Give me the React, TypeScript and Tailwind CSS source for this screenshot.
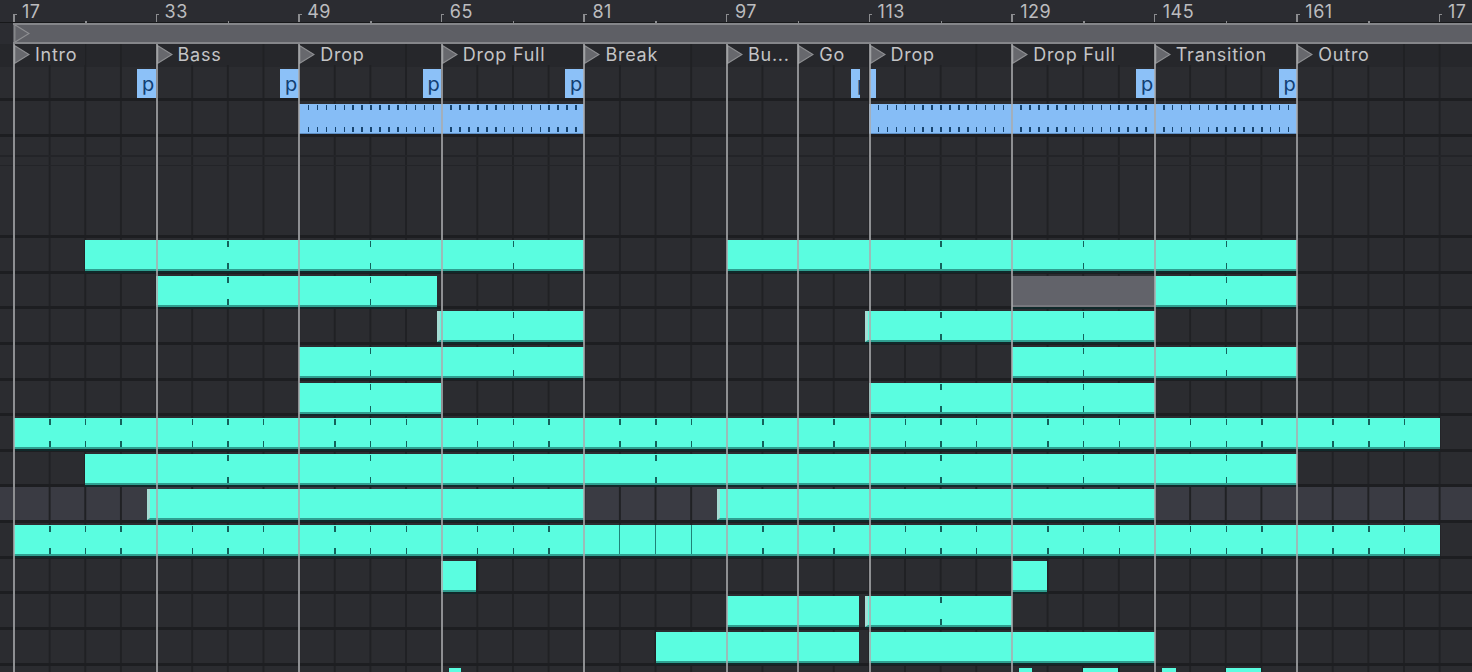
type Clip = { from: number; to: number; ticks?: 'half' | 'all'; bars?: number[]; tone?: 'grey'; edge?: boolean };

const STEP = 35.65;
const ORIGIN = 13.4;

const bars = ['17', '33', '49', '65', '81', '97', '113', '129', '145', '161', '17'];

const locators = [
  { x: 14, name: 'Intro' },
  { x: 156.6, name: 'Bass' },
  { x: 299.2, name: 'Drop' },
  { x: 441.8, name: 'Drop Full' },
  { x: 584.4, name: 'Break' },
  { x: 727, name: 'Bu...' },
  { x: 798.3, name: 'Go' },
  { x: 869.6, name: 'Drop' },
  { x: 1012.2, name: 'Drop Full' },
  { x: 1154.8, name: 'Transition' },
  { x: 1297.4, name: 'Outro' },
];

const pClips = [
  { from: 137, to: 156, label: true },
  { from: 280, to: 299, label: true },
  { from: 423, to: 441, label: true },
  { from: 565, to: 584, label: true },
  { from: 851, to: 860, label: true, cut: true },
  { from: 870, to: 876, label: false },
  { from: 1136, to: 1155, label: true },
  { from: 1279, to: 1297, label: true },
];

const tracks: { clips: Clip[]; tint?: boolean }[] = [
  { clips: [{ from: 85, to: 584, ticks: 'half' }, { from: 727, to: 1297, ticks: 'half' }] },
  { clips: [{ from: 156, to: 437, ticks: 'half' }, { from: 1012, to: 1155, tone: 'grey' }, { from: 1155, to: 1297, ticks: 'half' }] },
  { clips: [{ from: 437, to: 584, ticks: 'half', edge: true }, { from: 865, to: 1155, ticks: 'half', edge: true }] },
  { clips: [{ from: 299, to: 584, ticks: 'half' }, { from: 1012, to: 1297, ticks: 'half' }] },
  { clips: [{ from: 299, to: 441, ticks: 'half' }, { from: 869, to: 1155, ticks: 'half' }] },
  { clips: [{ from: 14, to: 1440, ticks: 'all' }] },
  { clips: [{ from: 85, to: 1297, ticks: 'half' }] },
  { tint: true, clips: [{ from: 147, to: 584, edge: true }, { from: 717, to: 1155, edge: true }] },
  { clips: [{ from: 14, to: 1440, ticks: 'all', bars: [17, 18, 19] }] },
  { clips: [{ from: 441, to: 476 }, { from: 1012, to: 1047 }] },
  { clips: [{ from: 727, to: 859 }, { from: 865, to: 1012, ticks: 'half', edge: true }] },
  { clips: [{ from: 656, to: 859 }, { from: 869, to: 1155 }] },
  { clips: [{ from: 449, to: 461 }, { from: 1019, to: 1032 }, { from: 1083, to: 1118 }, { from: 1162, to: 1176 }, { from: 1226, to: 1261 }] },
];

const gridBg =
  'bg-[linear-gradient(to_right,#202124_1.5px,transparent_1.5px)] bg-[length:35.65px_100%] bg-[position:13px_0]';

function Triangle({ dark }: { dark?: boolean }) {
  return (
    <svg viewBox="0 0 16 19" className="h-[19px] w-4 shrink-0">
      <path d="M0.8 0.8 L15 9.5 L0.8 18.2 Z" fill={dark ? '#63646a' : '#67686d'} stroke="#8e8f92" strokeWidth="1.2" />
    </svg>
  );
}

function Ruler() {
  return (
    <div className="flex h-[23px] border-b border-[#17181a] pl-[14px] pt-[3px]">
      {bars.map((bar, i) => (
        <div key={i} className="relative flex h-[19px] w-[142.6px] shrink-0 items-end">
          <span className="absolute bottom-0 left-[-1px] h-[8px] w-[1.5px] bg-[#8b8c8f]" />
          <span className="absolute bottom-[7px] left-0 h-[1.5px] w-[2.5px] bg-[#8b8c8f]" />
          <span className="absolute bottom-[-1px] left-[71px] h-[2px] w-[1.5px] bg-[#8b8c8f]" />
          <span className="pl-2 text-[18px] leading-[21px] tracking-[0.5px] text-[#bcbcbf]">{bar}</span>
        </div>
      ))}
    </div>
  );
}

function Overview() {
  return (
    <div className="ml-[13px] flex h-[21px] items-center border-y-2 border-[#85868a] bg-[#5e5f65] pl-px">
      <Triangle dark />
    </div>
  );
}

function LocatorRow() {
  return (
    <div className={`flex h-[23px] bg-[#26272b] pl-[14px] ${gridBg}`}>
      {locators.map((loc, i) => {
        const next = locators[i + 1]?.x ?? 1500;
        return (
          <div key={i} className="flex shrink-0 items-start" style={{ width: next - loc.x }}>
            <div className="flex h-[21px] items-center bg-[#26272b] pr-2">
              <Triangle />
              <span className="whitespace-nowrap pl-[5px] text-[18px] leading-[21px] tracking-[0.75px] text-[#c4c4c6]">{loc.name}</span>
            </div>
          </div>
        );
      })}
    </div>
  );
}

function PTrack() {
  let cursor = 0;
  return (
    <div className={`flex h-[34px] items-start border-b-[3px] border-[#1d1e21] bg-[#2b2c30] ${gridBg}`}>
      {pClips.map((clip, i) => {
        const gap = clip.from - cursor;
        cursor = clip.to;
        return (
          <div key={i} className="contents">
            <div className="shrink-0" style={{ width: gap }} />
            <div
              className={`mt-[2px] flex h-[29px] shrink-0 items-center overflow-hidden bg-[#8cc1f8] text-[20px] leading-none text-[#123f73] ${clip.cut ? 'pl-[6px]' : 'justify-center pl-[3px]'}`}
              style={{ width: clip.to - clip.from }}
            >
              {clip.label ? 'p' : ''}
            </div>
          </div>
        );
      })}
    </div>
  );
}

function BlueClip({ from, to }: { from: number; to: number }) {
  const ticks: number[] = [];
  const count = Math.round((to - from) / 8.91);
  for (let i = 1; i < count; i++) {
    if (i % 16 !== 0) ticks.push(i * 8.91);
  }
  return (
    <div className="relative mt-[3px] h-[30px] shrink-0 border-b border-[#5f8fc4] bg-[#86bdf6]" style={{ width: to - from }}>
      {ticks.map((left) => (
        <div key={left} className="contents">
          <span className="absolute top-px h-[5px] w-[1.5px] bg-[#17446f]" style={{ left }} />
          <span className="absolute bottom-px h-[5px] w-[1.5px] bg-[#17446f]" style={{ left }} />
        </div>
      ))}
    </div>
  );
}

function BlueTrack() {
  return (
    <div className={`flex h-[36px] items-start border-b-[3px] border-[#1d1e21] bg-[#2b2c30] pl-[299px] ${gridBg}`}>
      <BlueClip from={299} to={584} />
      <div className="w-[285px] shrink-0" />
      <BlueClip from={869} to={1297} />
    </div>
  );
}

function CyanClip({ clip }: { clip: Clip }) {
  const marks: number[] = [];
  for (let k = 0; k <= 40; k++) {
    const x = ORIGIN + k * STEP;
    if (x <= clip.from + 4 || x >= clip.to - 4) continue;
    // no tick where the Go locator sits
    if (k === 22) continue;
    if (clip.ticks === 'all' && k % 4 !== 0) marks.push(k);
    if (clip.ticks === 'half' && k % 4 === 2) marks.push(k);
  }
  return (
    <div
      className={`relative mt-[2px] h-[31px] shrink-0 border-b-2 shadow-[0_2px_0_#10292a] ${
        clip.tone === 'grey' ? 'border-[#77777d] bg-[#62636a]' : 'border-[#2f9f90] bg-[#5afde0]'
      } ${clip.edge ? 'border-l-[3px] border-l-[#a4ddd4]' : ''}`}
      style={{ width: clip.to - clip.from }}
    >
      {marks.map((k) => {
        const left = ORIGIN + k * STEP - clip.from - (clip.edge ? 3 : 0);
        if (clip.bars?.includes(k)) {
          return <span key={k} className="absolute inset-y-0 w-px bg-[#1f8278]" style={{ left }} />;
        }
        return (
          <div key={k} className="contents">
            <span className="absolute top-px h-[6px] w-[1.5px] bg-[#14625c]" style={{ left }} />
            <span className="absolute bottom-0 h-[6px] w-[1.5px] bg-[#14625c]" style={{ left }} />
          </div>
        );
      })}
    </div>
  );
}

function Track({ clips, tint }: { clips: Clip[]; tint?: boolean }) {
  let cursor = 0;
  return (
    <div className={`flex h-[35.65px] items-start border-b-[3px] border-[#1d1e21] ${tint ? 'bg-[#3a3b43]' : 'bg-[#2b2c30]'} ${gridBg}`}>
      {clips.map((clip, i) => {
        const gap = clip.from - cursor;
        cursor = clip.to;
        return (
          <div key={i} className="contents">
            <div className="shrink-0" style={{ width: gap }} />
            <CyanClip clip={clip} />
          </div>
        );
      })}
    </div>
  );
}

function LocatorLines() {
  return (
    <div className="pointer-events-none absolute inset-x-0 bottom-0 top-[44px] flex pl-[13px]">
      {locators.map((loc, i) => {
        const next = locators[i + 1]?.x ?? 1500;
        return <div key={i} className="shrink-0 border-l-2 border-[#aaabae]/80" style={{ width: next - loc.x }} />;
      })}
    </div>
  );
}

export default function App() {
  return (
    <div className="relative h-[672px] w-[1472px] overflow-hidden bg-[#2b2c31] font-['Inter','Liberation_Sans',sans-serif]">
      <Ruler />
      <Overview />
      <LocatorRow />
      <PTrack />
      <BlueTrack />
      <div className={`h-[20px] border-b-2 border-[#232428] bg-[#2b2c30] ${gridBg}`} />
      <div className={`h-[9px] border-b border-[#232428] bg-[#2b2c30] ${gridBg}`} />
      <div className={`h-[72px] border-b-[3px] border-[#1d1e21] bg-[#2b2c30] ${gridBg}`} />
      {tracks.map((track, i) => (
        <Track key={i} clips={track.clips} tint={track.tint} />
      ))}
      <LocatorLines />
    </div>
  );
}
